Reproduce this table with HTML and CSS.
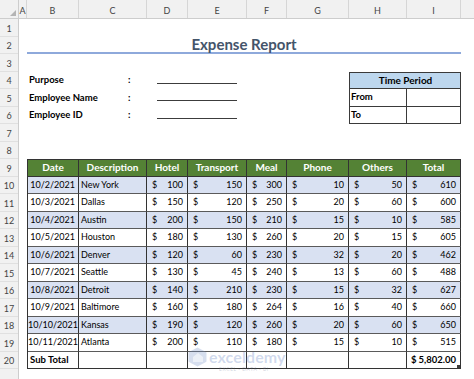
FILE: index.html
```html
<!DOCTYPE html>
<html lang="en">
<head>
<meta charset="utf-8">
<title>Expense Report</title>
<link rel="stylesheet" href="styles.css">
</head>
<body>
<div class="sheet">
  <div class="colbar">
    <div class="corner"><svg class="corner-tri" width="6" height="6" viewBox="0 0 6 6"><polygon points="6,0 6,6 0,6" fill="#b4b4b4"/></svg></div>
    <div class="ch c-a">A</div>
    <div class="ch c-b">B</div>
    <div class="ch c-c">C</div>
    <div class="ch c-d">D</div>
    <div class="ch c-e">E</div>
    <div class="ch c-f">F</div>
    <div class="ch c-g">G</div>
    <div class="ch c-h">H</div>
    <div class="ch c-i">I</div>
    <div class="ch c-j"></div>
  </div>
  <div class="body">
    <div class="rownums">
      <div class="rn">1</div><div class="rn">2</div><div class="rn">3</div><div class="rn">4</div>
      <div class="rn">5</div><div class="rn">6</div><div class="rn">7</div><div class="rn">8</div>
      <div class="rn">9</div><div class="rn">10</div><div class="rn">11</div><div class="rn">12</div>
      <div class="rn">13</div><div class="rn">14</div><div class="rn">15</div><div class="rn">16</div>
      <div class="rn">17</div><div class="rn">18</div><div class="rn">19</div><div class="rn">20</div>
      <div class="rn"></div>
    </div>
    <div class="content">
      <h1 class="title">Expense Report</h1>

      <div class="info">
        <div class="form">
          <div class="frow"><span class="flabel">Purpose</span><span class="fcolon">:</span><span class="fline"></span></div>
          <div class="frow"><span class="flabel">Employee Name</span><span class="fcolon">:</span><span class="fline"></span></div>
          <div class="frow"><span class="flabel">Employee ID</span><span class="fcolon">:</span><span class="fline"></span></div>
        </div>
        <div class="period">
          <div class="pcell phead">Time Period</div>
          <div class="pcell">From</div><div class="pcell"></div>
          <div class="pcell">To</div><div class="pcell"></div>
        </div>
      </div>

      <div class="table">
        <div class="tr head">
          <div class="td">Date</div><div class="td">Description</div><div class="td">Hotel</div><div class="td">Transport</div>
          <div class="td">Meal</div><div class="td">Phone</div><div class="td">Others</div><div class="td">Total</div>
        </div>
        <div class="tr alt">
          <div class="td date">10/2/2021</div><div class="td desc">New York</div>
          <div class="td money"><span>$</span><span>100</span></div><div class="td money"><span>$</span><span>150</span></div>
          <div class="td money"><span>$</span><span>300</span></div><div class="td money"><span>$</span><span>10</span></div>
          <div class="td money"><span>$</span><span>50</span></div><div class="td money"><span>$</span><span>610</span></div>
        </div>
        <div class="tr">
          <div class="td date">10/3/2021</div><div class="td desc">Dallas</div>
          <div class="td money"><span>$</span><span>150</span></div><div class="td money"><span>$</span><span>120</span></div>
          <div class="td money"><span>$</span><span>250</span></div><div class="td money"><span>$</span><span>20</span></div>
          <div class="td money"><span>$</span><span>60</span></div><div class="td money"><span>$</span><span>600</span></div>
        </div>
        <div class="tr alt">
          <div class="td date">10/4/2021</div><div class="td desc">Austin</div>
          <div class="td money"><span>$</span><span>200</span></div><div class="td money"><span>$</span><span>150</span></div>
          <div class="td money"><span>$</span><span>210</span></div><div class="td money"><span>$</span><span>15</span></div>
          <div class="td money"><span>$</span><span>10</span></div><div class="td money"><span>$</span><span>585</span></div>
        </div>
        <div class="tr">
          <div class="td date">10/5/2021</div><div class="td desc">Houston</div>
          <div class="td money"><span>$</span><span>180</span></div><div class="td money"><span>$</span><span>130</span></div>
          <div class="td money"><span>$</span><span>260</span></div><div class="td money"><span>$</span><span>20</span></div>
          <div class="td money"><span>$</span><span>15</span></div><div class="td money"><span>$</span><span>605</span></div>
        </div>
        <div class="tr alt">
          <div class="td date">10/6/2021</div><div class="td desc">Denver</div>
          <div class="td money"><span>$</span><span>120</span></div><div class="td money"><span>$</span><span>60</span></div>
          <div class="td money"><span>$</span><span>230</span></div><div class="td money"><span>$</span><span>32</span></div>
          <div class="td money"><span>$</span><span>20</span></div><div class="td money"><span>$</span><span>462</span></div>
        </div>
        <div class="tr">
          <div class="td date">10/7/2021</div><div class="td desc">Seattle</div>
          <div class="td money"><span>$</span><span>130</span></div><div class="td money"><span>$</span><span>45</span></div>
          <div class="td money"><span>$</span><span>240</span></div><div class="td money"><span>$</span><span>13</span></div>
          <div class="td money"><span>$</span><span>60</span></div><div class="td money"><span>$</span><span>488</span></div>
        </div>
        <div class="tr alt">
          <div class="td date">10/8/2021</div><div class="td desc">Detroit</div>
          <div class="td money"><span>$</span><span>140</span></div><div class="td money"><span>$</span><span>210</span></div>
          <div class="td money"><span>$</span><span>230</span></div><div class="td money"><span>$</span><span>15</span></div>
          <div class="td money"><span>$</span><span>32</span></div><div class="td money"><span>$</span><span>627</span></div>
        </div>
        <div class="tr">
          <div class="td date">10/9/2021</div><div class="td desc">Baltimore</div>
          <div class="td money"><span>$</span><span>160</span></div><div class="td money"><span>$</span><span>180</span></div>
          <div class="td money"><span>$</span><span>264</span></div><div class="td money"><span>$</span><span>16</span></div>
          <div class="td money"><span>$</span><span>40</span></div><div class="td money"><span>$</span><span>660</span></div>
        </div>
        <div class="tr alt">
          <div class="td date">10/10/2021</div><div class="td desc">Kansas</div>
          <div class="td money"><span>$</span><span>190</span></div><div class="td money"><span>$</span><span>120</span></div>
          <div class="td money"><span>$</span><span>260</span></div><div class="td money"><span>$</span><span>20</span></div>
          <div class="td money"><span>$</span><span>60</span></div><div class="td money"><span>$</span><span>650</span></div>
        </div>
        <div class="tr">
          <div class="td date">10/11/2021</div><div class="td desc">Atlanta</div>
          <div class="td money"><span>$</span><span>200</span></div><div class="td money"><span>$</span><span>110</span></div>
          <div class="td money"><span>$</span><span>180</span></div><div class="td money"><span>$</span><span>15</span></div>
          <div class="td money"><span>$</span><span>10</span></div><div class="td money"><span>$</span><span>515</span></div>
        </div>
        <div class="tr sub">
          <div class="td desc bold">Sub Total</div><div class="td"></div><div class="td"></div><div class="td"></div>
          <div class="td"></div><div class="td"></div><div class="td"></div>
          <div class="td money bold total"><span>$</span><span>5,802.00</span><i class="handle"></i></div>
        </div>
      </div>

      <div class="wm">
        <svg class="wm-icon" width="19" height="20" viewBox="0 0 19 20">
          <path d="M9.5 0.5 L18 5 Q18.5 5.3 18.5 6 L18.5 14 Q18.5 14.7 18 15 L9.5 19.5 L1 15 Q0.5 14.7 0.5 14 L0.5 6 Q0.5 5.3 1 5 Z" fill="rgba(120,145,200,0.30)"/>
          <path d="M5 10 L10 6 L15 10 L15 15 L5 15 Z" fill="rgba(255,255,255,0.55)"/>
        </svg>
        <div class="wm-text">
          <div class="wm-name">exceldemy</div>
          <div class="wm-tag">EXCEL · DATA · BI</div>
        </div>
      </div>
    </div>
  </div>
</div>
</body>
</html>
```

FILE: styles.css
```css
* {
  box-sizing: border-box;
  margin: 0;
  padding: 0;
}

html, body {
  width: 474px;
  height: 379px;
  overflow: hidden;
  background: #ffffff;
}

body {
  font-family: Lato, "Liberation Sans", sans-serif;
  color: #000000;
}

.sheet {
  width: 474px;
  height: 379px;
  overflow: hidden;
}

/* column header bar */
.colbar {
  display: flex;
  height: 19px;
  background: #f1f1f1;
  border-bottom: 1px solid #cdcdcd;
}

.corner {
  width: 19px;
  flex: none;
  position: relative;
  border-right: 1px solid #cdcdcd;
}

.corner-tri {
  position: absolute;
  right: 2px;
  bottom: 2px;
}

.ch {
  flex: none;
  border-right: 1px solid #d6d6d6;
  font-size: 9px;
  color: #444444;
  text-align: center;
  padding-top: 3px;
  line-height: 15px;
}

.c-a { width: 8px; }
.c-b { width: 52px; }
.c-c { width: 68px; }
.c-d { width: 41px; }
.c-e { width: 59px; }
.c-f { width: 40px; }
.c-g { width: 62px; }
.c-h { width: 58px; }
.c-i { width: 54px; }
.c-j { flex: 1; border-right: none; }

/* body */
.body {
  display: flex;
  height: 360px;
}

.rownums {
  width: 19px;
  flex: none;
  background: #f1f1f1;
  border-right: 1px solid #cdcdcd;
}

.rn {
  height: 17.5px;
  padding-top: 1.5px;
  line-height: 15px;
  font-size: 9px;
  color: #444444;
  text-align: center;
  border-bottom: 1px solid #e0e0e0;
}

.content {
  flex: 1;
  position: relative;
  padding-left: 8px;
}

/* title */
.title {
  width: 434px;
  height: 35px;
  display: flex;
  align-items: flex-end;
  justify-content: center;
  border-bottom: 2px solid #8ea9db;
  font-size: 15px;
  line-height: 15px;
  font-weight: 700;
  color: #44546a;
}

/* info block */
.info {
  display: flex;
  margin-top: 17.5px;
  height: 52.5px;
}

.form {
  width: 322px;
  flex: none;
}

.frow {
  display: flex;
  align-items: center;
  height: 17.5px;
  font-size: 9.5px;
  font-weight: 700;
  padding-bottom: 1px;
}

.flabel {
  width: 101px;
  padding-left: 2px;
}

.fcolon {
  width: 29px;
}

.fline {
  align-self: flex-start;
  width: 80px;
  height: 12px;
  border-bottom: 1px solid #3c3c3c;
}

.period {
  display: grid;
  grid-template-columns: 57px 54px;
  grid-template-rows: 16.5px 17.5px 17.5px;
  border-left: 1px solid #3a3a3a;
  border-top: 1px solid #3a3a3a;
  font-size: 9.5px;
  font-weight: 700;
}

.pcell {
  border-right: 1px solid #3a3a3a;
  border-bottom: 1px solid #3a3a3a;
  padding-left: 1px;
  line-height: 16px;
}

.phead {
  grid-column: span 2;
  background: #bdd7ee;
  text-align: center;
  font-size: 10px;
  line-height: 15.5px;
}

/* expense table */
.table {
  margin-top: 35px;
  width: 434px;
  display: grid;
  grid-template-columns: 51px 68px 41px 59px 40px 62px 58px 54px;
  grid-template-rows: 16.5px;
  grid-auto-rows: 17.5px;
  border-left: 1px solid #333333;
  border-top: 1px solid #333333;
  font-size: 9px;
}

.tr {
  display: contents;
}

.td {
  border-right: 1px solid #333333;
  border-bottom: 1px solid #5a5a5a;
  line-height: 16.5px;
  white-space: nowrap;
  overflow: hidden;
}

.head .td {
  background: #548235;
  color: #ffffff;
  font-weight: 700;
  font-size: 10px;
  text-align: center;
  line-height: 15.5px;
  border-bottom-color: #333333;
}

.alt .td {
  background: #d9e1f2;
}

.date {
  text-align: right;
  padding-right: 3px;
}

.desc {
  padding-left: 2px;
}

.money {
  display: flex;
  justify-content: space-between;
  padding: 0 4px 0 5px;
}

.bold {
  font-weight: 700;
  font-size: 9.5px;
}

.sub .td {
  border-bottom-color: #333333;
}

.total {
  position: relative;
  padding: 0 4px 0 4px;
}

.handle {
  position: absolute;
  right: 0;
  bottom: 0;
  width: 3px;
  height: 3px;
  background: #3a3a3a;
}

/* watermark */
.wm {
  position: absolute;
  left: 169px;
  top: 328px;
  display: flex;
  gap: 2px;
  pointer-events: none;
}

.wm-icon {
  flex: none;
}

.wm-text {
  margin-top: 4px;
}

.wm-name {
  font-size: 16px;
  line-height: 11px;
  font-weight: 700;
  color: rgba(110, 138, 200, 0.32);
  letter-spacing: 0.1px;
}

.wm-tag {
  margin-left: 10px;
  margin-top: 4px;
  font-size: 5px;
  line-height: 6px;
  letter-spacing: 0.6px;
  color: rgba(110, 120, 150, 0.35);
}
```
